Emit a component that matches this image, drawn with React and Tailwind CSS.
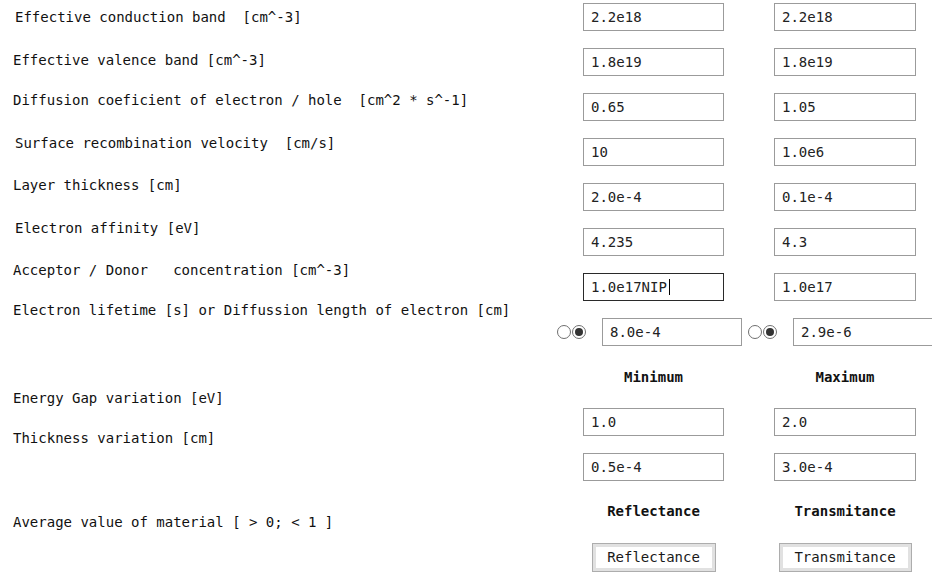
import React from 'react';

const labels = [
  { t: 'Effective conduction band  [cm^-3]', mt: 'mt-[7px]', pl: 'pl-[15px]' },
  { t: 'Effective valence band [cm^-3]', mt: 'mt-[23px]', pl: 'pl-[13px]' },
  { t: 'Diffusion coeficient of electron / hole  [cm^2 * s^-1]', mt: 'mt-[20px]', pl: 'pl-[13px]' },
  { t: 'Surface recombination velocity  [cm/s]', mt: 'mt-[23px]', pl: 'pl-[15px]' },
  { t: 'Layer thickness [cm]', mt: 'mt-[22px]', pl: 'pl-[13px]' },
  { t: 'Electron affinity [eV]', mt: 'mt-[23px]', pl: 'pl-[15px]' },
  { t: 'Acceptor / Donor   concentration [cm^-3]', mt: 'mt-[22px]', pl: 'pl-[13px]' },
  { t: 'Electron lifetime [s] or Diffussion length of electron [cm]', mt: 'mt-[20px]', pl: 'pl-[13px]' },
  { t: 'Energy Gap variation [eV]', mt: 'mt-[68px]', pl: 'pl-[13px]' },
  { t: 'Thickness variation [cm]', mt: 'mt-[20px]', pl: 'pl-[13px]' },
  { t: 'Average value of material [ > 0; < 1 ]', mt: 'mt-[64px]', pl: 'pl-[13px]' },
];

const pairs = [
  ['2.2e18', '2.2e18'],
  ['1.8e19', '1.8e19'],
  ['0.65', '1.05'],
  ['10', '1.0e6'],
  ['2.0e-4', '0.1e-4'],
  ['4.235', '4.3'],
];

const Field = ({ value, className = '', focused = false }) => (
  <input
    readOnly
    value={value}
    className={`h-[28px] px-[7px] bg-white text-[14px] text-[#222] outline-none border ${
      focused ? 'border-[#2a2a2a]' : 'border-[#9b9b9b]'
    } ${className}`}
  />
);

const Radio = ({ checked }) => (
  <span className="w-[14px] h-[14px] rounded-full border border-[#6f6f6f] bg-white flex items-center justify-center shrink-0">
    {checked && <span className="w-[8px] h-[8px] rounded-full bg-[#333]" />}
  </span>
);

const Btn = ({ children, w }) => (
  <button className={`${w} h-[29px] border border-[#adadad] bg-white shadow-[inset_0_0_0_3px_#e1e1e1] text-[14px] text-[#1a1a1a]`}>
    {children}
  </button>
);

export default function App() {
  return (
    <div
      className="w-[932px] h-[586px] overflow-hidden bg-white flex text-[#111] text-[14px]"
      style={{ fontFamily: '"DejaVu Sans Mono", "Liberation Mono", monospace' }}
    >
      <div className="w-[557px] shrink-0 flex flex-col">
        {labels.map((l, i) => (
          <div key={i} className={`${l.mt} ${l.pl} leading-[20px] whitespace-pre`}>
            {l.t}
          </div>
        ))}
      </div>

      <div className="flex-1 flex flex-col pt-[3px]">
        <div className="flex flex-col gap-[17px]">
          {pairs.map((p, i) => (
            <div key={i} className="flex pl-[26px] gap-[50px]">
              <Field value={p[0]} className="w-[141px]" />
              <Field value={p[1]} className="w-[142px]" />
            </div>
          ))}
          <div className="flex pl-[26px] gap-[50px]">
            <div className="relative">
              <Field value="1.0e17NIP" focused className="w-[141px]" />
              <span className="absolute left-[86px] top-[6px] w-px h-[16px] bg-black" />
            </div>
            <Field value="1.0e17" className="w-[142px]" />
          </div>
          <div className="flex items-center">
            <Radio />
            <span className="ml-px"><Radio checked /></span>
            <Field value="8.0e-4" className="w-[140px] ml-[16px] shrink-0" />
            <span className="ml-[6px]"><Radio /></span>
            <span className="ml-px"><Radio checked /></span>
            <Field value="2.9e-6" className="w-[140px] ml-[16px] shrink-0" />
          </div>
        </div>

        <div className="flex pl-[26px] gap-[50px] mt-[21px] font-bold leading-[20px]">
          <div className="w-[141px] text-center">Minimum</div>
          <div className="w-[142px] text-center">Maximum</div>
        </div>

        <div className="flex flex-col gap-[17px] mt-[21px]">
          <div className="flex pl-[26px] gap-[50px]">
            <Field value="1.0" className="w-[141px]" />
            <Field value="2.0" className="w-[142px]" />
          </div>
          <div className="flex pl-[26px] gap-[50px]">
            <Field value="0.5e-4" className="w-[141px]" />
            <Field value="3.0e-4" className="w-[142px]" />
          </div>
        </div>

        <div className="flex pl-[26px] gap-[50px] mt-[20px] font-bold leading-[20px]">
          <div className="w-[141px] text-center">Reflectance</div>
          <div className="w-[142px] text-center">Transmitance</div>
        </div>

        <div className="flex pl-[26px] gap-[50px] mt-[22px]">
          <div className="w-[141px] flex justify-center">
            <Btn w="w-[124px]">Reflectance</Btn>
          </div>
          <div className="w-[142px] flex justify-center">
            <Btn w="w-[133px]">Transmitance</Btn>
          </div>
        </div>
      </div>
    </div>
  );
}
